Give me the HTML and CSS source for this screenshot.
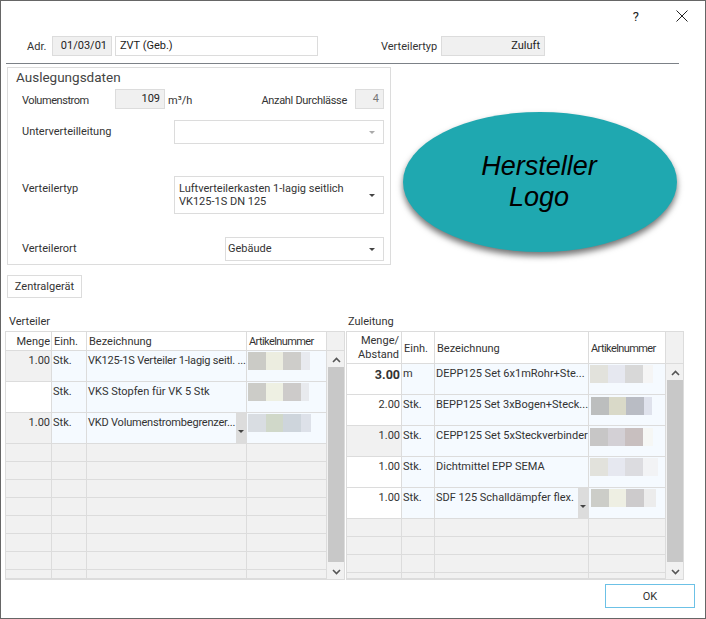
FILE: index.html
```html
<!DOCTYPE html>
<html lang="de">
<head>
<meta charset="UTF-8">
<title>Verteiler</title>
<link rel="stylesheet" href="styles.css">
</head>
<body>

<div class="window">
  <div class="titlebar">
    <span class="help">?</span>
    <svg class="close" width="12" height="12" viewBox="0 0 12 12"><path d="M0.5 0.5L11.5 11.5M11.5 0.5L0.5 11.5" stroke="#222" stroke-width="1" fill="none"/></svg>
  </div>

  <div class="head-row">
    <span class="adr-label">Adr.</span>
    <div class="field ro right adr-code">01/03/01</div>
    <div class="field adr-name">ZVT (Geb.)</div>
    <span class="type-label">Verteilertyp</span>
    <div class="field ro right type-value">Zuluft</div>
  </div>
  <div class="rule"></div>

  <div class="upper">
    <div class="group">
      <div class="group-title">Auslegungsdaten</div>
      <div class="form-row row-flow">
        <span class="form-label flow-label">Volumenstrom</span>
        <div class="field ro right flow-value">109</div>
        <span class="unit">m³/h</span>
        <span class="count-label">Anzahl Durchlässe</span>
        <div class="field ro right count-value">4</div>
      </div>
      <div class="form-row row-sub">
        <span class="form-label">Unterverteilleitung</span>
        <div class="combo combo-wide disabled"><span class="arrow"></span></div>
      </div>
      <div class="form-row row-type">
        <span class="form-label">Verteilertyp</span>
        <div class="combo combo-wide">
          <span class="combo-text">Luftverteilerkasten 1-lagig seitlich<br>VK125-1S DN 125</span>
          <span class="arrow"></span>
        </div>
      </div>
      <div class="form-row row-place">
        <span class="form-label">Verteilerort</span>
        <div class="combo combo-place">
          <span class="combo-text">Gebäude</span>
          <span class="arrow"></span>
        </div>
      </div>
    </div>
    <div class="logo">Hersteller<br>Logo</div>
  </div>

  <button class="btn btn-central">Zentralgerät</button>

  <div class="tables">
    <div class="table-block">
      <div class="table-title title-left">Verteiler</div>
      <div class="grid grid-left">
        <table>
          <colgroup><col class="l1"><col class="l2"><col class="l3"><col class="l4"></colgroup>
          <tr class="head"><td class="num">Menge</td><td>Einh.</td><td class="pad">Bezeichnung</td><td class="art-head">Artikelnummer</td></tr>
          <tr class="item">
            <td class="num grey">1.00</td><td>Stk.</td><td class="squeeze">VK125-1S Verteiler 1-lagig seitl. ...</td>
            <td class="art"><div class="blur sw-l1"></div></td>
          </tr>
          <tr class="item">
            <td class="num white"></td><td>Stk.</td><td>VKS Stopfen für VK 5 Stk</td>
            <td class="art"><div class="blur sw-l2"></div></td>
          </tr>
          <tr class="item">
            <td class="num grey">1.00</td><td>Stk.</td>
            <td class="has-drop squeeze">VKD Volumenstrombegrenzer...<span class="cell-drop"><span class="arrow"></span></span></td>
            <td class="art"><div class="blur sw-l3"></div></td>
          </tr>
          <tr class="empty"><td></td><td></td><td></td><td></td></tr>
          <tr class="empty"><td></td><td></td><td></td><td></td></tr>
          <tr class="empty"><td></td><td></td><td></td><td></td></tr>
          <tr class="empty"><td></td><td></td><td></td><td></td></tr>
          <tr class="empty"><td></td><td></td><td></td><td></td></tr>
          <tr class="empty"><td></td><td></td><td></td><td></td></tr>
          <tr class="empty"><td></td><td></td><td></td><td></td></tr>
          <tr class="empty last-l"><td></td><td></td><td></td><td></td></tr>
        </table>
        <div class="scrollbar">
          <div class="scroll-head head-l"></div>
          <div class="scroll-btn"><svg width="9" height="6" viewBox="0 0 9 6"><path d="M1 5L4.5 1.5L8 5" stroke="#555" stroke-width="1.6" fill="none"/></svg></div>
          <div class="thumb"></div>
          <div class="scroll-btn"><svg width="9" height="6" viewBox="0 0 9 6"><path d="M1 1L4.5 4.5L8 1" stroke="#555" stroke-width="1.6" fill="none"/></svg></div>
        </div>
      </div>
    </div>

    <div class="table-block">
      <div class="table-title title-right">Zuleitung</div>
      <div class="grid grid-right">
        <table>
          <colgroup><col class="r1"><col class="r2"><col class="r3"><col class="r4"></colgroup>
          <tr class="head head-tall"><td class="num tight">Menge/<br>Abstand</td><td>Einh.</td><td class="pad">Bezeichnung</td><td class="art-head">Artikelnummer</td></tr>
          <tr class="item">
            <td class="num white strong">3.00</td><td>m</td><td>DEPP125 Set 6x1mRohr+Ste...</td>
            <td class="art"><div class="blur sw-r1"></div></td>
          </tr>
          <tr class="item">
            <td class="num white">2.00</td><td>Stk.</td><td>BEPP125 Set 3xBogen+Steck...</td>
            <td class="art"><div class="blur sw-r2"></div></td>
          </tr>
          <tr class="item">
            <td class="num grey">1.00</td><td>Stk.</td><td>CEPP125 Set 5xSteckverbinder</td>
            <td class="art"><div class="blur sw-r3"></div></td>
          </tr>
          <tr class="item">
            <td class="num white">1.00</td><td>Stk.</td><td>Dichtmittel EPP SEMA</td>
            <td class="art"><div class="blur sw-r4"></div></td>
          </tr>
          <tr class="item">
            <td class="num white">1.00</td><td>Stk.</td>
            <td class="has-drop">SDF 125 Schalldämpfer flex.<span class="cell-drop"><span class="arrow"></span></span></td>
            <td class="art"><div class="blur sw-r5"></div></td>
          </tr>
          <tr class="empty"><td></td><td></td><td></td><td></td></tr>
          <tr class="empty"><td></td><td></td><td></td><td></td></tr>
          <tr class="empty"><td></td><td></td><td></td><td></td></tr>
          <tr class="empty last-r"><td></td><td></td><td></td><td></td></tr>
        </table>
        <div class="scrollbar">
          <div class="scroll-head head-r"></div>
          <div class="scroll-btn"><svg width="9" height="6" viewBox="0 0 9 6"><path d="M1 5L4.5 1.5L8 5" stroke="#555" stroke-width="1.6" fill="none"/></svg></div>
          <div class="thumb"></div>
          <div class="scroll-btn"><svg width="9" height="6" viewBox="0 0 9 6"><path d="M1 1L4.5 4.5L8 1" stroke="#555" stroke-width="1.6" fill="none"/></svg></div>
        </div>
      </div>
    </div>
  </div>

  <div class="footer">
    <button class="btn btn-ok">OK</button>
  </div>
</div>

</body>
</html>
```

FILE: styles.css
```css
* {
  box-sizing: border-box;
}
body {
  margin: 0;
  font-family: Roboto, "Liberation Sans", sans-serif;
  font-size: 11px;
  color: #333;
  background-color: #fff;
}
.window {
  width: 706px;
  height: 619px;
  border: 1px solid #666;
  background-color: #fff;
  overflow: hidden;
}

/* title bar */
.titlebar {
  height: 30px;
  display: flex;
  align-items: center;
  justify-content: flex-end;
  padding: 0 17px 0 0;
}
.help {
  font-size: 13px;
  color: #222;
  margin-right: 37px;
}

/* top row */
.head-row {
  display: flex;
  align-items: center;
  height: 20px;
  margin-top: 5px;
  padding-left: 26px;
}
.adr-label {
  width: 25px;
}
.field {
  height: 20px;
  line-height: 17px;
  border: 1px solid #dcdcdc;
  padding: 0 4px;
  color: #222;
}
.ro {
  background-color: #f0f0f0;
}
.right {
  text-align: right;
}
.adr-code {
  width: 60px;
}
.adr-name {
  width: 203px;
  margin-left: 3px;
}
.type-label {
  margin-left: 63px;
  width: 60px;
}
.type-value {
  width: 104px;
}
.rule {
  height: 1px;
  margin: 7px 26px 0 5px;
  background-color: #7c8187;
}

/* Auslegungsdaten */
.upper {
  display: flex;
  margin-top: 3px;
}
.group {
  width: 384px;
  height: 198px;
  margin-left: 6px;
  border: 1px solid #dcdcdc;
  padding: 0 6px 0 14px;
}
.group-title {
  height: 21px;
  margin-left: -6px;
  font-size: 13.5px;
  line-height: 18px;
  color: #444;
}
.form-row {
  display: flex;
}
.form-label {
  width: 152px;
}
.row-flow {
  align-items: center;
  height: 20px;
}
.flow-label {
  width: 93px;
  padding-top: 2px;
  letter-spacing: -0.45px;
}
.flow-value {
  width: 50px;
}
.unit {
  margin-left: 3px;
  padding-top: 2px;
}
.count-label {
  margin-left: auto;
  margin-right: 8px;
  padding-top: 2px;
  letter-spacing: -0.3px;
}
.count-value {
  width: 29px;
  color: #777;
}
.row-sub {
  height: 24px;
  margin-top: 11px;
}
.row-type {
  height: 38px;
  margin-top: 32px;
}
.row-place {
  height: 24px;
  margin-top: 23px;
  justify-content: space-between;
}
.row-sub .form-label {
  padding-top: 5px;
}
.row-type .form-label {
  padding-top: 6px;
}
.row-place .form-label {
  padding-top: 5px;
}
.combo {
  display: flex;
  align-items: center;
  justify-content: space-between;
  border: 1px solid #dcdcdc;
  padding: 0 8px 0 4px;
}
.combo.disabled {
  justify-content: flex-end;
}
.combo.disabled .arrow {
  border-top-color: #aaa;
}
.combo-wide {
  width: 210px;
}
.combo-place {
  width: 159px;
  padding-left: 2px;
  padding-bottom: 2px;
}
.combo-place .arrow {
  margin-top: 2px;
}
.combo-text {
  line-height: 13px;
  color: #333;
}
.arrow {
  display: block;
  width: 0;
  height: 0;
  border-left: 3px solid transparent;
  border-right: 3px solid transparent;
  border-top: 3px solid #444;
}

/* logo placeholder */
.logo {
  width: 274px;
  height: 140px;
  margin: 45px 0 0 12px;
  border-radius: 50%;
  background-color: #1fa8b0;
  box-shadow: 0 4px 6px rgba(0, 0, 0, 0.55);
  color: #000;
  font-family: "Liberation Sans", sans-serif;
  font-size: 27px;
  font-style: italic;
  line-height: 31px;
  text-align: center;
  padding: 39px 2px 0 0;
}

/* buttons */
.btn {
  display: block;
  font-family: inherit;
  font-size: 11px;
  color: #333;
  background-color: #fff;
  border: 1px solid #dcdcdc;
  padding: 0;
}
.btn-central {
  width: 75px;
  height: 23px;
  margin: 10px 0 0 6px;
}

/* tables */
.tables {
  display: flex;
  gap: 1px;
  margin: 13px 0 0 4px;
}
.table-title {
  height: 20px;
  line-height: 22px;
}
.title-left {
  padding-left: 4px;
}
.title-right {
  padding-left: 2px;
}
.grid {
  display: flex;
  height: 249px;
  border: 1px solid #dcdcdc;
  overflow: hidden;
}
.grid-left {
  width: 340px;
}
.grid-right {
  width: 338px;
}
table {
  table-layout: fixed;
  border-collapse: separate;
  border-spacing: 0;
  flex: none;
}
.grid-left table {
  width: 321px;
}
.grid-right table {
  width: 319px;
}
.l1 { width: 46px; }
.l2 { width: 35px; }
.l3 { width: 160px; }
.l4 { width: 80px; }
.r1 { width: 55px; }
.r2 { width: 33px; }
.r3 { width: 154px; }
.r4 { width: 77px; }
td {
  position: relative;
  padding: 0 0 0 1px;
  border-right: 1px solid #dcdcdc;
  border-bottom: 1px solid #dcdcdc;
  vertical-align: top;
  white-space: nowrap;
  overflow: hidden;
}
.head td {
  height: 19px;
  background-color: #fff;
  vertical-align: middle;
  padding-left: 2px;
}
.head-tall td {
  height: 32px;
  padding-top: 1px;
}
.head .pad {
  padding-left: 2px;
}
.head .art-head {
  letter-spacing: -0.6px;
}
.item td {
  height: 31px;
  padding-top: 3px;
  background-color: #f5faff;
  color: #333;
}
.empty td {
  height: 18px;
  background-color: #f1f1f1;
}
.last-l td {
  height: 9px;
}
.last-r td {
  height: 6px;
}
td.num {
  text-align: right;
  padding-right: 1px;
}
.head-tall td.tight {
  line-height: 14px;
  padding-top: 0;
  padding-right: 2px;
}
.item td.grey {
  background-color: #f1f1f1;
}
.item td.white {
  background-color: #fff;
}
.item td.squeeze {
  letter-spacing: -0.2px;
}
.strong {
  font-weight: bold;
  font-size: 12.5px;
}
.item td.art {
  padding: 1px 0 0 1px;
}
.blur {
  height: 18px;
}
.sw-l1 {
  width: 62px;
  background: linear-gradient(90deg, #cbcbc6 0 18px, #ecede0 18px 35px, #cecdca 35px 53px, #e8eaef 53px);
}
.sw-l2 {
  width: 61px;
  background: linear-gradient(90deg, #ccccc8 0 18px, #eef0e3 18px 35px, #cdcbca 35px 53px, #e8eaee 53px);
}
.sw-l3 {
  width: 63px;
  background: linear-gradient(90deg, #d9dde2 0 18px, #d0d8c9 18px 35px, #ced5dc 35px 53px, #dde1e9 53px);
}
.sw-r1 {
  width: 63px;
  background: linear-gradient(90deg, #e2e2dc 0 18px, #e6e8f0 18px 35px, #d8d8d8 35px 53px, #f5f5f5 53px);
}
.sw-r2 {
  width: 61px;
  margin: 1px 0 0 1px;
  background: linear-gradient(90deg, #bcbebe 0 18px, #d9d9c8 18px 35px, #b9bcc4 35px 53px, #dfe2ec 53px);
}
.sw-r3 {
  width: 63px;
  margin-top: 1px;
  background: linear-gradient(90deg, #c7c6c6 0 18px, #d3d0d5 18px 35px, #c8bfbf 35px 53px, #f6f7f5 53px);
}
.sw-r4 {
  width: 68px;
  background: linear-gradient(90deg, #e2e2dc 0 18px, #e6e8f0 18px 35px, #dcdce0 35px 53px, #f2f3f5 53px);
}
.sw-r5 {
  width: 65px;
  margin-left: 1px;
  background: linear-gradient(90deg, #cccdc8 0 18px, #eeefe3 18px 35px, #cdcbcc 35px 53px, #ececec 53px);
}
.cell-drop {
  position: absolute;
  top: 0;
  right: 0;
  bottom: 0;
  width: 10px;
  background-color: #dcdcdc;
  display: flex;
  align-items: center;
  justify-content: center;
}
.cell-drop .arrow {
  margin-top: 6px;
}

/* scrollbar */
.scrollbar {
  flex: 1;
  display: flex;
  flex-direction: column;
  background-color: #f1f1f1;
}
.scroll-head {
  flex: none;
  border-bottom: 1px solid #dcdcdc;
}
.head-l {
  height: 19px;
}
.head-r {
  height: 32px;
}
.scroll-btn {
  flex: none;
  height: 16px;
  display: flex;
  align-items: center;
  justify-content: center;
  padding: 2px 0 0 1px;
}
.thumb {
  flex: 1;
  margin: 0 0 1px 1px;
  background-color: #c8c8c8;
}

/* footer */
.footer {
  display: flex;
  justify-content: flex-end;
  margin-top: 4px;
  padding-right: 10px;
}
.btn-ok {
  width: 90px;
  height: 24px;
  border-color: #6cc1e6;
}
```
